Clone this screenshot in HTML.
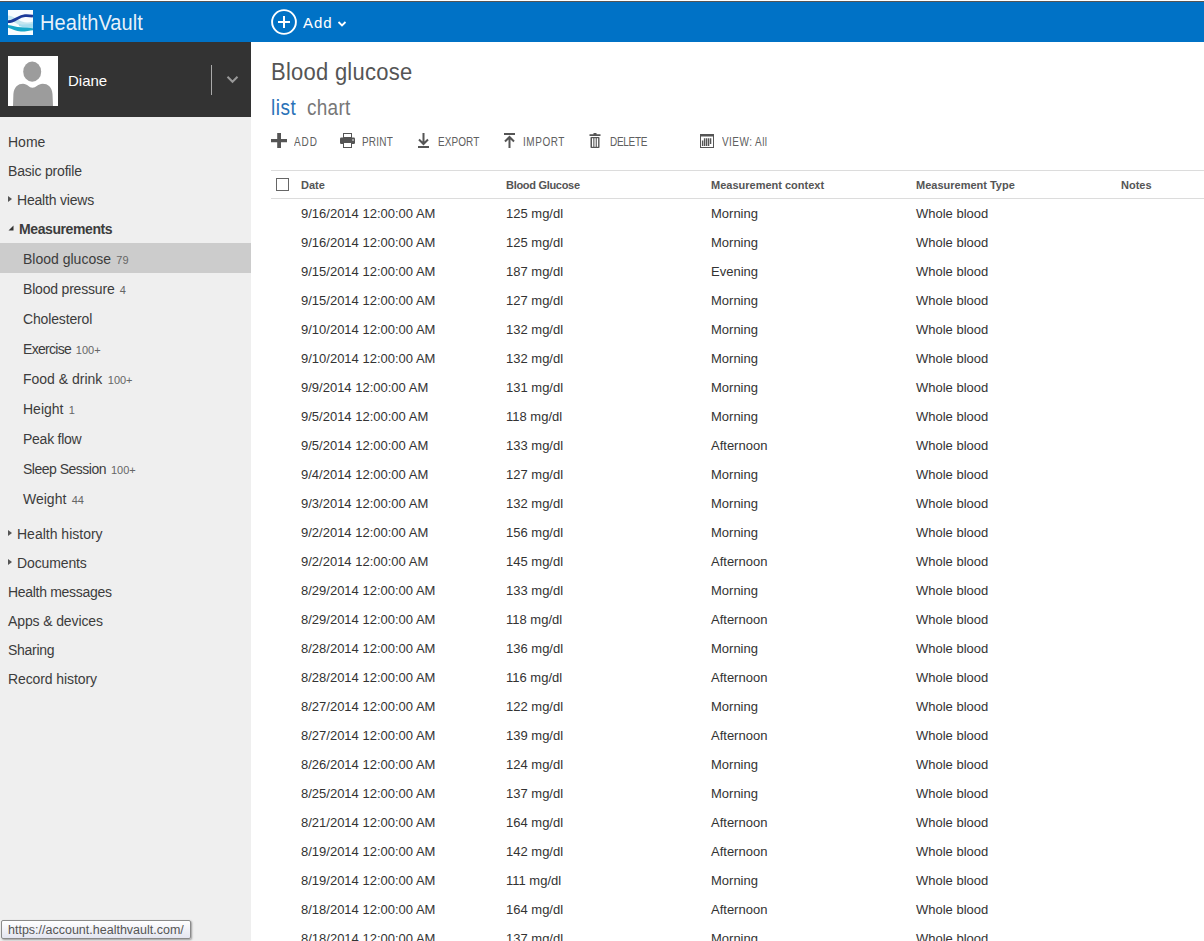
<!DOCTYPE html>
<html><head><meta charset="utf-8">
<style>
*{margin:0;padding:0;box-sizing:border-box}
html,body{width:1204px;height:941px;overflow:hidden;background:#fff;font-family:"Liberation Sans",sans-serif;color:#333}
.a{position:absolute;white-space:nowrap}
#topline{position:absolute;left:0;top:0;width:1204px;height:2px;background:#fff;border-bottom:1px solid #555}
#bar{position:absolute;left:0;top:2px;width:1204px;height:40px;background:#0072c6}
#logo{position:absolute;left:8px;top:10px;width:25px;height:25px}
#brand{position:absolute;left:40px;top:6px;font-size:20px;line-height:30px;color:rgba(255,255,255,0.92);letter-spacing:0.1px;transform:scaleY(1.09);transform-origin:0 0}
#addc{position:absolute;left:270px;top:8px;width:28px;height:28px}
#addt{position:absolute;left:303px;top:9px;font-size:15px;line-height:28px;color:#fff;letter-spacing:0.9px}
#side{position:absolute;left:0;top:42px;width:251px;height:899px;background:#efefef}
#user{position:absolute;left:0;top:42px;width:251px;height:75px;background:#333}
#avatar{position:absolute;left:8px;top:56px;width:50px;height:50px;background:#fff}
#uname{position:absolute;left:68px;top:67px;font-size:15px;line-height:28px;color:#fff}
#usep{position:absolute;left:211px;top:65px;width:1px;height:30px;background:#aaa}
.n{position:absolute;left:8px;font-size:14px;line-height:29px;height:29px;color:#3c3c3c;white-space:nowrap}
.s{position:absolute;left:23px;font-size:14px;line-height:30px;height:30px;color:#3c3c3c;white-space:nowrap}
.cnt{font-size:11px;color:#666;letter-spacing:0;margin-left:1.5px}
#sel{position:absolute;left:0;top:243px;width:251px;height:30px;background:#cccccc}
.tri-r{position:absolute;left:8px;width:0;height:0;border-top:3.5px solid transparent;border-bottom:3.5px solid transparent;border-left:4px solid #555}
#title{position:absolute;left:271px;top:56px;font-size:22px;line-height:30px;color:#555;letter-spacing:0.25px;transform:scaleY(1.09);transform-origin:0 0}
#list{position:absolute;left:271px;top:92px;font-size:19px;line-height:28px;color:#2a72b8;letter-spacing:0.5px;transform:scaleY(1.13);transform-origin:0 0}
#chart{position:absolute;left:307px;top:92px;font-size:19px;line-height:28px;color:#777;letter-spacing:0.25px;transform:scaleY(1.13);transform-origin:0 0}
.tb{position:absolute;top:130px;font-size:10px;line-height:20px;color:#606060;white-space:nowrap;transform:scaleY(1.24);transform-origin:0 0}
.hl{position:absolute;left:271px;width:933px;height:1px;background:#dcdcdc}
.h{position:absolute;top:172px;font-size:11px;font-weight:bold;line-height:27px;color:#555;white-space:nowrap}
.r{position:absolute;left:0;width:1204px;height:29px;font-size:13px;line-height:29px;color:#333}
.r span{position:absolute;top:0;white-space:nowrap}
.c1{left:301px}.c2{left:506px}.c3{left:711px}.c4{left:916px}
#tip{position:absolute;left:1px;top:920px;width:190px;height:19px;padding-top:1px;border:1px solid #8a8a8a;border-radius:2px;background:linear-gradient(#ffffff,#e4e5f0);box-shadow:1px 1px 2px rgba(0,0,0,0.35);font-size:12.5px;line-height:17px;color:#555;padding-left:6px}
</style></head><body>
<div id="topline"></div>
<div id="bar"></div>
<svg id="logo" viewBox="0 0 25 25">
<rect width="25" height="25" fill="#f7fcff"/>
<path d="M0,5.5 C5,6 9,9.5 14,11.5 C18,13 22,12.5 25,11.5 L25,17.5 C20,18 15,17 11,15 C7,13 3,10 0,9.5 Z" fill="#c4e6f0"/>
<path d="M11,14 C15,15 20,14.5 25,13.5 L25,18 C20,18.5 15,17.5 11,16 Z" fill="#a6dcef"/>
<path d="M0,11.7 C7,11.7 10,6 17,5.6 C20,5.4 23,5.8 25,6.2" stroke="#1a3a9a" stroke-width="2.8" fill="none"/>
<path d="M0,14.9 C4,15.5 8,17 13,17.2 C18,17.5 22,18 25,18.3 L25,20.3 C22,20.5 18,21.6 13,21.6 C8,21.5 4,18.5 0,17.8 Z" fill="#16a6c8"/>
</svg>
<div id="brand">HealthVault</div>
<svg id="addc" viewBox="0 0 28 28">
<circle cx="14" cy="14" r="11.9" stroke="#fff" stroke-width="1.9" fill="none"/>
<path d="M14,8 V20 M8,14 H20" stroke="#fff" stroke-width="2"/>
</svg>
<div id="addt">Add</div>
<svg class="a" style="left:337px;top:20px" width="10" height="8" viewBox="0 0 10 8"><path d="M1.5,2 L5,5.5 L8.5,2" stroke="#fff" stroke-width="1.8" fill="none"/></svg>

<div id="side"></div>
<div id="user"></div>
<svg id="avatar" viewBox="0 0 50 50">
<rect width="50" height="50" fill="#fff"/>
<ellipse cx="24.2" cy="15.7" rx="9" ry="10.1" fill="#9c9c9c"/>
<path d="M5,50 L5.4,38 C6,31 10,27.8 15,27.8 C19.5,27.8 21,31.8 24.5,31.8 C28,31.8 30,27.8 34.6,27.8 C40,27.8 44,31 44.5,38 L45,50 Z" fill="#9c9c9c"/>
</svg>
<div id="uname">Diane</div>
<div id="usep"></div>
<svg class="a" style="left:226px;top:75px" width="13" height="9" viewBox="0 0 13 9"><path d="M1.5,1.8 L6.5,6.8 L11.5,1.8" stroke="#999" stroke-width="2" fill="none"/></svg>

<div class="n" style="top:128px">Home</div>
<div class="n" style="top:157px;letter-spacing:-0.19px">Basic profile</div>
<div class="tri-r" style="top:196px"></div>
<div class="n" style="top:186px;left:17px;letter-spacing:-0.2px">Health views</div>
<svg class="a" style="left:8px;top:225px" width="6" height="6" viewBox="0 0 6 6"><path d="M5.5,0.5 V5.5 H0.5 Z" fill="#333"/></svg>
<div class="n" style="top:215px;left:19px;font-weight:bold;letter-spacing:-0.4px">Measurements</div>
<div id="sel"></div>
<div class="s" style="top:244px">Blood glucose <span class="cnt">79</span></div>
<div class="s" style="top:274px;letter-spacing:-0.19px">Blood pressure <span class="cnt">4</span></div>
<div class="s" style="top:304px;letter-spacing:-0.15px">Cholesterol</div>
<div class="s" style="top:334px;letter-spacing:-0.7px">Exercise <span class="cnt">100+</span></div>
<div class="s" style="top:364px">Food &amp; drink <span class="cnt">100+</span></div>
<div class="s" style="top:394px">Height <span class="cnt">1</span></div>
<div class="s" style="top:424px;letter-spacing:-0.25px">Peak flow</div>
<div class="s" style="top:454px;letter-spacing:-0.5px">Sleep Session <span class="cnt">100+</span></div>
<div class="s" style="top:484px">Weight <span class="cnt">44</span></div>
<div class="tri-r" style="top:530px"></div>
<div class="n" style="top:520px;left:17px">Health history</div>
<div class="tri-r" style="top:559px"></div>
<div class="n" style="top:549px;left:17px;letter-spacing:-0.12px">Documents</div>
<div class="n" style="top:578px;letter-spacing:-0.3px">Health messages</div>
<div class="n" style="top:607px;letter-spacing:-0.12px">Apps &amp; devices</div>
<div class="n" style="top:636px;letter-spacing:-0.29px">Sharing</div>
<div class="n" style="top:665px;letter-spacing:-0.1px">Record history</div>

<div id="title">Blood glucose</div>
<div id="list">list</div>
<div id="chart">chart</div>

<svg class="a" style="left:271px;top:133px" width="16" height="15" viewBox="0 0 16 15"><path d="M0,6 H16 V9.3 H0 Z M6.2,0 H10 V15 H6.2 Z" fill="#555"/></svg>
<div class="tb" style="left:294px;letter-spacing:0.9px">ADD</div>
<svg class="a" style="left:340px;top:133px" width="15" height="15" viewBox="0 0 15 15"><rect x="3.5" y="0.5" width="8" height="4" fill="#fff" stroke="#555"/><rect x="0" y="4.5" width="15" height="6.5" rx="1.2" fill="#555"/><rect x="3.5" y="9.5" width="8" height="5" fill="#fff" stroke="#555"/><circle cx="13" cy="7" r="0.8" fill="#fff"/></svg>
<div class="tb" style="left:362px;letter-spacing:0.2px">PRINT</div>
<svg class="a" style="left:418px;top:133px" width="11" height="15" viewBox="0 0 11 15"><path d="M5.5,0 V11 M1,6.5 L5.5,11 L10,6.5" stroke="#555" stroke-width="2" fill="none"/><rect x="0" y="13" width="11" height="2" fill="#555"/></svg>
<div class="tb" style="left:438px;letter-spacing:0.08px">EXPORT</div>
<svg class="a" style="left:504px;top:133px" width="11" height="15" viewBox="0 0 11 15"><rect x="0" y="0" width="11" height="2" fill="#555"/><path d="M5.5,15 V4 M1,8.5 L5.5,4 L10,8.5" stroke="#555" stroke-width="2" fill="none"/></svg>
<div class="tb" style="left:523px;letter-spacing:0.54px">IMPORT</div>
<svg class="a" style="left:589px;top:133px" width="12" height="15" viewBox="0 0 12 15"><path d="M0.5,1.2 H11.5 V3 H0.5 Z M4.5,0 H7.5 V1.2 H4.5Z" fill="#555"/><rect x="1.5" y="4" width="9" height="11" rx="0.8" fill="#555"/><rect x="3" y="5.2" width="1.3" height="8.6" fill="#fff"/><rect x="5.4" y="5.2" width="1.3" height="8.6" fill="#fff"/><rect x="7.8" y="5.2" width="1.3" height="8.6" fill="#fff"/></svg>
<div class="tb" style="left:610px;letter-spacing:-0.3px">DELETE</div>
<svg class="a" style="left:700px;top:134px" width="14" height="14" viewBox="0 0 14 14"><rect x="0.5" y="0.5" width="13" height="13" fill="#fff" stroke="#555"/><rect x="0" y="0" width="14" height="2.5" fill="#555"/><path d="M2.6,12 V6.5 M4.6,12 V4.2 M6.6,12 V4.2 M8.6,12 V4.2 M10.6,10 V4.2" stroke="#555" stroke-width="1.4"/></svg>
<div class="tb" style="left:722px;letter-spacing:0.45px">VIEW: All</div>

<div class="hl" style="top:170px"></div>
<div class="hl" style="top:198px"></div>
<div class="a" style="left:276px;top:178px;width:13px;height:13px;border:1px solid #666;background:#fff"></div>
<div class="h" style="left:301px">Date</div>
<div class="h" style="left:506px;letter-spacing:-0.3px">Blood Glucose</div>
<div class="h" style="left:711px">Measurement context</div>
<div class="h" style="left:916px">Measurement Type</div>
<div class="h" style="left:1121px">Notes</div>
<div class="r" style="top:199px"><span class="c1">9/16/2014 12:00:00 AM</span><span class="c2">125 mg/dl</span><span class="c3">Morning</span><span class="c4">Whole blood</span></div>
<div class="r" style="top:228px"><span class="c1">9/16/2014 12:00:00 AM</span><span class="c2">125 mg/dl</span><span class="c3">Morning</span><span class="c4">Whole blood</span></div>
<div class="r" style="top:257px"><span class="c1">9/15/2014 12:00:00 AM</span><span class="c2">187 mg/dl</span><span class="c3">Evening</span><span class="c4">Whole blood</span></div>
<div class="r" style="top:286px"><span class="c1">9/15/2014 12:00:00 AM</span><span class="c2">127 mg/dl</span><span class="c3">Morning</span><span class="c4">Whole blood</span></div>
<div class="r" style="top:315px"><span class="c1">9/10/2014 12:00:00 AM</span><span class="c2">132 mg/dl</span><span class="c3">Morning</span><span class="c4">Whole blood</span></div>
<div class="r" style="top:344px"><span class="c1">9/10/2014 12:00:00 AM</span><span class="c2">132 mg/dl</span><span class="c3">Morning</span><span class="c4">Whole blood</span></div>
<div class="r" style="top:373px"><span class="c1">9/9/2014 12:00:00 AM</span><span class="c2">131 mg/dl</span><span class="c3">Morning</span><span class="c4">Whole blood</span></div>
<div class="r" style="top:402px"><span class="c1">9/5/2014 12:00:00 AM</span><span class="c2">118 mg/dl</span><span class="c3">Morning</span><span class="c4">Whole blood</span></div>
<div class="r" style="top:431px"><span class="c1">9/5/2014 12:00:00 AM</span><span class="c2">133 mg/dl</span><span class="c3">Afternoon</span><span class="c4">Whole blood</span></div>
<div class="r" style="top:460px"><span class="c1">9/4/2014 12:00:00 AM</span><span class="c2">127 mg/dl</span><span class="c3">Morning</span><span class="c4">Whole blood</span></div>
<div class="r" style="top:489px"><span class="c1">9/3/2014 12:00:00 AM</span><span class="c2">132 mg/dl</span><span class="c3">Morning</span><span class="c4">Whole blood</span></div>
<div class="r" style="top:518px"><span class="c1">9/2/2014 12:00:00 AM</span><span class="c2">156 mg/dl</span><span class="c3">Morning</span><span class="c4">Whole blood</span></div>
<div class="r" style="top:547px"><span class="c1">9/2/2014 12:00:00 AM</span><span class="c2">145 mg/dl</span><span class="c3">Afternoon</span><span class="c4">Whole blood</span></div>
<div class="r" style="top:576px"><span class="c1">8/29/2014 12:00:00 AM</span><span class="c2">133 mg/dl</span><span class="c3">Morning</span><span class="c4">Whole blood</span></div>
<div class="r" style="top:605px"><span class="c1">8/29/2014 12:00:00 AM</span><span class="c2">118 mg/dl</span><span class="c3">Afternoon</span><span class="c4">Whole blood</span></div>
<div class="r" style="top:634px"><span class="c1">8/28/2014 12:00:00 AM</span><span class="c2">136 mg/dl</span><span class="c3">Morning</span><span class="c4">Whole blood</span></div>
<div class="r" style="top:663px"><span class="c1">8/28/2014 12:00:00 AM</span><span class="c2">116 mg/dl</span><span class="c3">Afternoon</span><span class="c4">Whole blood</span></div>
<div class="r" style="top:692px"><span class="c1">8/27/2014 12:00:00 AM</span><span class="c2">122 mg/dl</span><span class="c3">Morning</span><span class="c4">Whole blood</span></div>
<div class="r" style="top:721px"><span class="c1">8/27/2014 12:00:00 AM</span><span class="c2">139 mg/dl</span><span class="c3">Afternoon</span><span class="c4">Whole blood</span></div>
<div class="r" style="top:750px"><span class="c1">8/26/2014 12:00:00 AM</span><span class="c2">124 mg/dl</span><span class="c3">Morning</span><span class="c4">Whole blood</span></div>
<div class="r" style="top:779px"><span class="c1">8/25/2014 12:00:00 AM</span><span class="c2">137 mg/dl</span><span class="c3">Morning</span><span class="c4">Whole blood</span></div>
<div class="r" style="top:808px"><span class="c1">8/21/2014 12:00:00 AM</span><span class="c2">164 mg/dl</span><span class="c3">Afternoon</span><span class="c4">Whole blood</span></div>
<div class="r" style="top:837px"><span class="c1">8/19/2014 12:00:00 AM</span><span class="c2">142 mg/dl</span><span class="c3">Afternoon</span><span class="c4">Whole blood</span></div>
<div class="r" style="top:866px"><span class="c1">8/19/2014 12:00:00 AM</span><span class="c2">111 mg/dl</span><span class="c3">Morning</span><span class="c4">Whole blood</span></div>
<div class="r" style="top:895px"><span class="c1">8/18/2014 12:00:00 AM</span><span class="c2">164 mg/dl</span><span class="c3">Afternoon</span><span class="c4">Whole blood</span></div>
<div class="r" style="top:924px"><span class="c1">8/18/2014 12:00:00 AM</span><span class="c2">137 mg/dl</span><span class="c3">Morning</span><span class="c4">Whole blood</span></div>

<div id="tip">https://account.healthvault.com/</div>
</body></html>
